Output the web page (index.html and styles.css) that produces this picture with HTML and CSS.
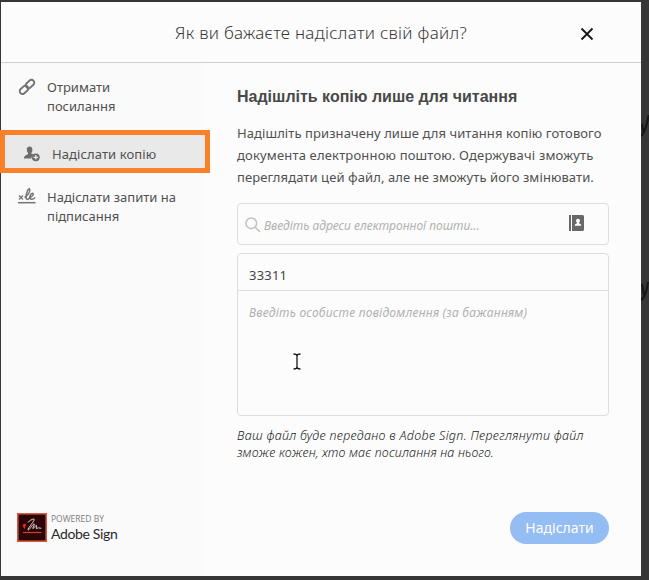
FILE: index.html
```
<!DOCTYPE html>
<html lang="uk">
<head>
<meta charset="utf-8">
<title>Надіслати файл</title>
<link rel="stylesheet" href="styles.css">
</head>
<body>
<svg class="backdrop-mark mark-top" viewBox="0 0 8 24"><path d="M0 21C3 19 7 7 7.500 0M1 9l1.500 9"/></svg>
<svg class="backdrop-mark mark-mid" viewBox="0 0 8 24"><path d="M0 21C3 20 6 12 7 3M1 5l2 11"/></svg>
<main class="dialog">
  <header class="header">
    <h1 class="title">Як ви бажаєте надіслати свій файл?</h1>
    <svg class="close" viewBox="0 0 14 14"><path d="M1.500 1.500 12.500 12.500M12.500 1.500 1.500 12.500"/></svg>
  </header>
  <div class="body">
    <aside class="sidebar">
      <nav class="nav">
        <div class="item">
          <svg class="icon" viewBox="0 0 18 18" fill="none" stroke="#747474" stroke-width="1.900"><rect x="-4.800" y="-2.800" width="9.600" height="5.600" rx="2.800" transform="translate(6 11.800) rotate(-42)"/><rect x="-4.800" y="-2.800" width="9.600" height="5.600" rx="2.800" transform="translate(12 6) rotate(-42)"/></svg>
          <span>Отримати<br>посилання</span>
        </div>
        <div class="item selected">
          <svg class="icon" viewBox="0 0 18 18"><path fill="#6c6c6c" d="M6.500 1.500C4.500 1.500 3.700 3 3.800 5c.1 1.500.8 2.300 1.200 3v1.200C3 10.200 1 10.600 1 13.500h7.500c0-2 .8-3.300 2.400-4.200L8.300 8.800V8c.6-.8 1-1.600 1.100-3 .1-2-.9-3.500-2.900-3.500z"/><circle cx="12.800" cy="12.300" r="3.900" fill="#6c6c6c"/><path d="M12.800 10v4.600M10.500 12.300h4.600" stroke="#eee" stroke-width="1.200"/></svg>
          <span>Надіслати копію</span>
        </div>
        <div class="item sign">
          <svg class="icon" viewBox="0 0 18 18" fill="none" stroke="#747474"><path stroke-width="1.300" d="M1 7.500 5 11.500M5 7.500 1 11.500"/><path stroke-width="1.500" d="M6.500 9.500C9.500 8 12.500 3.500 11.700 1.200 10.500-.5 8.200 4.500 8 8.500c0 4 2.400 3.300 3.700 1.200C14.200 8.700 16 6.500 14.900 5.400c-1.500-.7-3.200 2.200-3 4.300.3 2.500 3 1.900 5.300-.2"/><path stroke-width="1.500" d="M0 14.700h17.500"/></svg>
          <span>Надіслати запити на<br>підписання</span>
        </div>
      </nav>
      <div class="brand">
        <svg class="logo" viewBox="0 0 30 29"><rect x=".8" y=".8" width="28.400" height="27.400" fill="#2c0508" stroke="#d2583f" stroke-width="1.600"/><path d="M6 11.500c1-1.200 3-1 3 .5 0 1.500-1.500 3-1.300 4.200C6.500 15 5.500 13 6 11.500z" fill="#d5301f"/><path d="M6 19.500h18.500" stroke="#c84432" stroke-width="1.200"/><path d="M11 9.500c1.500-2.300 4-3 5.700-3.500 2 .2-2 4.500-5 9-1.300 2-.7 3 1.300.5 2-2.700 3.500-5 4.300-4.500.5 1-2.500 4.600-1.300 4.500 1.300-.4 2.300-3.300 3.500-3 .7.500-.9 2.700-.2 3 .9.300 1.500-1 2.500-.6l2.500.4" fill="none" stroke="#eee2e2" stroke-width=".95"/></svg>
        <div class="brand-text"><span class="powered">POWERED BY</span><span class="product">Adobe Sign</span></div>
      </div>
    </aside>
    <section class="content">
      <h2 class="heading">Надішліть копію лише для читання</h2>
      <p class="intro"><span class="l1">Надішліть призначену лише для читання копію готового</span><br><span class="l2">документа електронною поштою. Одержувачі зможуть</span><br><span class="l3">переглядати цей файл, але не зможуть його змінювати.</span></p>
      <div class="recipients">
        <svg class="search" viewBox="0 0 16 16"><circle cx="6.300" cy="6.300" r="5.300"/><path d="M10.200 10.200 15 15"/></svg>
        <span class="placeholder">Введіть адреси електронної пошти...</span>
        <svg class="contacts" viewBox="0 0 15 16"><path fill="#686868" d="M0 0h2v16H0zM3 0h10.500A1.500 1.500 0 0 1 15 1.500v13a1.500 1.500 0 0 1-1.500 1.500H3z"/><path fill="#fff" d="M9 3.700c-1.500 0-2 1-1.900 2.200.1.900.6 1.300.9 1.700v.7c-1.200.5-2.200.9-2.200 2.400h6.400c0-1.500-1-1.900-2.200-2.400v-.7c.3-.4.800-.8.900-1.700.1-1.200-.4-2.200-1.900-2.200z"/></svg>
      </div>
      <div class="message">
        <div class="subject">33311</div>
        <div class="note"><span class="placeholder">Введіть особисте повідомлення (за бажанням)</span></div>
        <svg class="cursor" viewBox="0 0 8 17"><path d="M.5 1C2.500 1 4 1.500 4 3c0-1.500 1.500-2 3.500-2M4 2.500v12M.5 16c2 0 3.500-.5 3.500-2 0 1.500 1.500 2 3.500 2"/></svg>
      </div>
      <p class="disclaimer"><span class="d1">Ваш файл буде передано в Adobe Sign. Переглянути файл</span><br><span class="d2">зможе кожен, хто має посилання на нього.</span></p>
      <button class="send">Надіслати</button>
    </section>
  </div>
</main>
</body>
</html>
```
FILE: styles.css
```
* { box-sizing: border-box; }
body {
  margin: 0;
  width: 649px;
  height: 580px;
  padding: 2px 8px 4px 1px;
  overflow: hidden;
  position: relative;
  background: #373636;
  font-family: "Noto Sans", "Open Sans", sans-serif;
  color: #505050;
}
h1, h2, p { margin: 0; }
span { white-space: nowrap; }
.backdrop-mark {
  position: absolute;
  left: 641px;
  width: 8px;
  height: 24px;
  fill: none;
  stroke: #151515;
  stroke-width: 2;
}
.mark-top { top: 115px; }
.mark-mid { top: 279px; }
.dialog {
  position: relative;
  display: flex;
  flex-direction: column;
  height: 574px;
  background: #fcfcfc;
}
.header {
  flex: none;
  display: flex;
  align-items: center;
  height: 61px;
  padding: 0 47px 0 174px;
  border-bottom: 1px solid #cdd1cf;
}
.title {
  flex: 1;
  padding-top: 1px;
  font-size: 17px;
  font-weight: 350;
  letter-spacing: .28px;
  line-height: 24px;
  white-space: nowrap;
  color: #383838;
}
.close { width: 14px; height: 14px; margin-top: 4px; fill: none; stroke: #151515; stroke-width: 1.8; }
.body { flex: 1; display: flex; min-height: 0; }
.sidebar {
  width: 203px;
  flex: none;
  display: flex;
  flex-direction: column;
  justify-content: space-between;
  padding: 15px 0 33px;
  background: #fafafa;
}
.item {
  display: flex;
  align-items: flex-start;
  gap: 11px;
  padding-left: 17px;
  font-size: 13px;
  line-height: 19px;
}
.icon { width: 18px; height: 18px; flex: none; overflow: visible; }
.selected {
  position: relative;
  width: 210px;
  height: 43px;
  margin: 14px 0 15px -1px;
  padding: 10px 0 0 18px;
  border: 5px solid #fa8128;
  background: #e9e9e9;
  letter-spacing: .1px;
}
.brand { display: flex; gap: 4px; padding-left: 16px; height: 30px; }
.logo { width: 30px; height: 29px; }
.brand-text { display: flex; flex-direction: column; font-family: "Open Sans", sans-serif; }
.powered { font-size: 8.5px; line-height: 12px; color: #7c7c7c; }
.product { font-family: Lato, sans-serif; font-size: 14px; line-height: 17px; letter-spacing: -.35px; color: #292929; }
.content {
  flex: 1;
  display: flex;
  flex-direction: column;
  padding: 23px 32px 0 33px;
}
.heading {
  font: bold 16px/22px "Liberation Sans", Arial, sans-serif;
  white-space: nowrap;
  color: #484848;
}
.intro { margin-top: 14px; font-size: 13px; line-height: 22px; }
.l1 { letter-spacing: .08px; }
.l2 { letter-spacing: .17px; }
.l3 { letter-spacing: .09px; }
.recipients {
  display: flex;
  align-items: center;
  height: 42px;
  margin-top: 15px;
  padding: 0 24px 0 7px;
  border: 1px solid #dedede;
  border-radius: 4px;
}
.search { width: 16px; height: 16px; margin: 2px 3px 0 0; fill: none; stroke: #c2c2c2; stroke-width: 1.6; }
.placeholder { font-size: 12px; font-style: italic; color: #b1b1b1; }
.recipients .placeholder { padding-top: 2px; }
.contacts { width: 15px; height: 16px; margin: -2px 0 0 auto; }
.message {
  position: relative;
  height: 163px;
  margin-top: 8px;
  border: 1px solid #dedede;
  border-radius: 4px;
}
.subject {
  height: 37px;
  padding: 4px 0 0 11px;
  border-bottom: 1px solid #dedede;
  font-size: 13px;
  line-height: 34px;
  letter-spacing: .2px;
  color: #444;
}
.note { padding: 11px; line-height: 18px; letter-spacing: .24px; }
.cursor { position: absolute; left: 55px; top: 99px; width: 8px; height: 17px; fill: none; stroke: #171717; stroke-width: 1.3; }
.disclaimer { margin-top: 11px; font-size: 12.5px; font-weight: 350; line-height: 17px; font-style: italic; letter-spacing: .3px; color: #222; }
.d2 { letter-spacing: .17px; }
.send {
  align-self: flex-end;
  width: 99px;
  height: 32px;
  margin-top: 51px;
  padding: 0;
  border: 0;
  border-radius: 16px;
  background: #93bdf3;
  color: #fff;
  font: 14px/32px "Noto Sans", sans-serif;
}
```
